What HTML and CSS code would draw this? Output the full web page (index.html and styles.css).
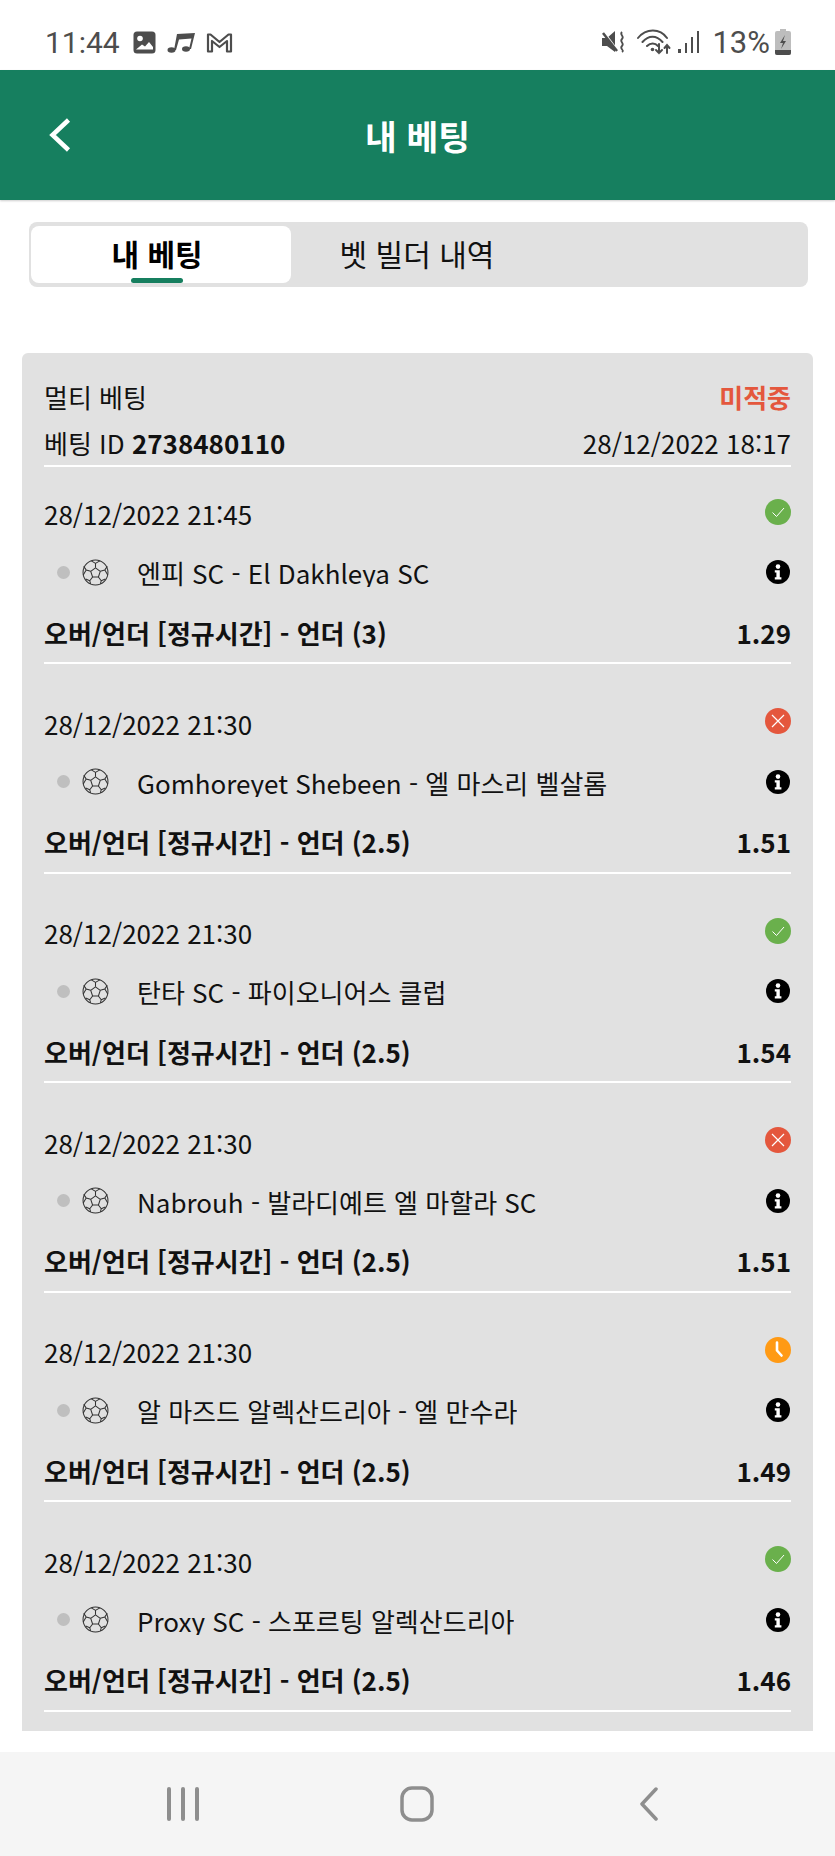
FILE: index.html
```html
<!DOCTYPE html>
<html lang="ko">
<head>
    <meta charset="UTF-8">
    <title>내 베팅</title>
    <link rel="stylesheet" href="styles.css">
</head>
<body>
    <svg class="defs" width="0" height="0">
        <symbol id="ball" viewBox="0 0 26 26">
            <g fill="none" stroke="#333" stroke-width="1" stroke-linejoin="round">
                <circle cx="13" cy="13" r="12"/>
                <path d="M13 8.500l4.600 3.400-1.800 5.400h-5.600l-1.800-5.400z"/>
                <path d="M13 8.500V4.200l-4-2.400M13 4.200l4.200-2.400M17.600 11.900l4.400-1.400 2.400-3.400M22 10.500l2.800 5M15.800 17.300l2.700 3.700-.8 3M18.500 21l4-1.800M10.200 17.300l-2.700 3.700.8 3M7.500 21l-4-1.800M8.400 11.900l-4.400-1.400-2.400-3.400M4 10.500l-2.800 5"/>
            </g>
        </symbol>
        <symbol id="info" viewBox="0 0 24 24">
            <circle cx="12" cy="12" r="12" fill="#000"/>
            <circle cx="12" cy="6.600" r="2.300" fill="#fff"/>
            <path d="M8.800 10.200h5v7h1.600v2.400H8.800v-2.400h1.600v-4.600H8.800z" fill="#fff"/>
        </symbol>
        <symbol id="won" viewBox="0 0 26 26">
            <circle cx="13" cy="13" r="13" fill="#6ab04c"/>
            <path d="M7.500 13.500l4 4 7.500-8.500" fill="none" stroke="#fff" stroke-width="1"/>
        </symbol>
        <symbol id="lost" viewBox="0 0 26 26">
            <circle cx="13" cy="13" r="13" fill="#e4573d"/>
            <path d="M7 7l12 12M19 7L7 19" fill="none" stroke="#fff" stroke-width="1.200"/>
        </symbol>
        <symbol id="pending" viewBox="0 0 26 26">
            <circle cx="13" cy="13" r="13" fill="#ff9a14"/>
            <path d="M12 5.500v8l4.500 5" fill="none" stroke="#fff" stroke-width="2.600" stroke-linecap="round" stroke-linejoin="round"/>
        </symbol>
    </svg>

    <div class="status-bar">
        <div class="status-left">
            <span class="clock">11:44</span>
            <svg width="23" height="23" viewBox="0 0 23 23"><rect x="0.500" y="0.500" width="22" height="22" rx="3.500" fill="#4d4d4d"/><circle cx="7" cy="7.500" r="2.800" fill="#fff"/><path d="M3 18.500l6-5 3 2 4-4.500 4 5v2.500z" fill="#fff"/></svg>
            <svg width="28" height="21" viewBox="0 0 28 21"><g fill="#4d4d4d"><ellipse cx="4.500" cy="18" rx="4" ry="2.800"/><ellipse cx="19" cy="17" rx="4" ry="2.800"/><path d="M7 18L10 2l18-1-4 16h-2l2.500-10.500L12 7.500 9 18z"/></g></svg>
            <svg width="27" height="21" viewBox="0 0 27 21"><path d="M2 19.500V2.500h2.500L13.500 10l9-7.500H25v17h-4V9l-7.500 6L6 9v10.500z" fill="none" stroke="#4d4d4d" stroke-width="2.200" stroke-linejoin="round"/></svg>
        </div>
        <div class="status-right">
            <svg class="mute" width="24" height="24" viewBox="0 0 24 24"><path d="M0 8h5l8-7v21l-8-6H0z" fill="#4d4d4d"/><path d="M1 1l15 20" stroke="#fff" stroke-width="2"/><path d="M1 3l14 18" stroke="#4d4d4d" stroke-width="2.500"/><path d="M20 2c-3 3 3 4 0 7s3 4 0 7 3 4 0 6" fill="none" stroke="#4d4d4d" stroke-width="1.800"/></svg>
            <svg class="wifi" width="36" height="26" viewBox="0 0 36 26"><g fill="none" stroke="#4d4d4d" stroke-width="2" stroke-linecap="round"><path d="M1 9c8-10 22-10 29 0M5.500 13c6-7 14-7 20 0M10 17c3.500-3.500 8-3.500 11 0"/><path d="M22 15v9M19 21l3 3 3-3M30 24v-8M27.500 19l2.500-3 2.500 3"/></g><circle cx="15.500" cy="20.500" r="1.800" fill="#4d4d4d"/></svg>
            <svg class="signal" width="22" height="24" viewBox="0 0 22 24"><g fill="#4d4d4d"><rect x="0" y="19" width="3" height="4"/><rect x="7" y="13" width="2" height="10"/><rect x="13" y="7" width="2" height="16"/><rect x="19" y="1" width="2" height="22"/></g></svg>
            <span class="battery-text">13%</span>
            <svg class="battery" width="16" height="26" viewBox="0 0 16 26"><path d="M5 0h6v2h3a2 2 0 0 1 2 2v20a2 2 0 0 1-2 2H2a2 2 0 0 1-2-2V4a2 2 0 0 1 2-2h3z" fill="#bdbdbd"/><path d="M0 21h16v3a2 2 0 0 1-2 2H2a2 2 0 0 1-2-2z" fill="#4d4d4d"/><path d="M10 6l-5 8h3l-2 6 5-8H8z" fill="#4d4d4d"/></svg>
        </div>
    </div>

    <header class="top-bar">
        <svg class="back" width="24" height="36" viewBox="0 0 24 36"><path d="M20.500 3L4.500 18l16 15" fill="none" stroke="#fff" stroke-width="4.500"/></svg>
        <h1>내 베팅</h1>
    </header>

    <div class="tabs">
        <div class="tab active">내 베팅</div>
        <div class="tab">벳 빌더 내역</div>
    </div>

    <div class="bet-card">
        <div class="bet-head">
            <div class="row head-row">
                <span>멀티 베팅</span>
                <span class="result-lost">미적중</span>
            </div>
            <div class="row head-row">
                <span>베팅 ID <b>2738480110</b></span>
                <span>28/12/2022 18:17</span>
            </div>
        </div>

        <div class="bet-item">
            <div class="row date-row"><span>28/12/2022 21:45</span><svg class="state"><use href="#won"/></svg></div>
            <div class="row match-row"><div class="match"><i class="dot"></i><svg class="ball"><use href="#ball"/></svg><span class="teams">엔피 SC - El Dakhleya SC</span></div><svg class="info"><use href="#info"/></svg></div>
            <div class="row market-row"><span>오버/언더 [정규시간] - 언더 (3)</span><span>1.29</span></div>
        </div>

        <div class="bet-item">
            <div class="row date-row"><span>28/12/2022 21:30</span><svg class="state"><use href="#lost"/></svg></div>
            <div class="row match-row"><div class="match"><i class="dot"></i><svg class="ball"><use href="#ball"/></svg><span class="teams">Gomhoreyet Shebeen - 엘 마스리 벨살롬</span></div><svg class="info"><use href="#info"/></svg></div>
            <div class="row market-row"><span>오버/언더 [정규시간] - 언더 (2.5)</span><span>1.51</span></div>
        </div>

        <div class="bet-item">
            <div class="row date-row"><span>28/12/2022 21:30</span><svg class="state"><use href="#won"/></svg></div>
            <div class="row match-row"><div class="match"><i class="dot"></i><svg class="ball"><use href="#ball"/></svg><span class="teams">탄타 SC - 파이오니어스 클럽</span></div><svg class="info"><use href="#info"/></svg></div>
            <div class="row market-row"><span>오버/언더 [정규시간] - 언더 (2.5)</span><span>1.54</span></div>
        </div>

        <div class="bet-item">
            <div class="row date-row"><span>28/12/2022 21:30</span><svg class="state"><use href="#lost"/></svg></div>
            <div class="row match-row"><div class="match"><i class="dot"></i><svg class="ball"><use href="#ball"/></svg><span class="teams">Nabrouh - 발라디예트 엘 마할라 SC</span></div><svg class="info"><use href="#info"/></svg></div>
            <div class="row market-row"><span>오버/언더 [정규시간] - 언더 (2.5)</span><span>1.51</span></div>
        </div>

        <div class="bet-item">
            <div class="row date-row"><span>28/12/2022 21:30</span><svg class="state"><use href="#pending"/></svg></div>
            <div class="row match-row"><div class="match"><i class="dot"></i><svg class="ball"><use href="#ball"/></svg><span class="teams">알 마즈드 알렉산드리아 - 엘 만수라</span></div><svg class="info"><use href="#info"/></svg></div>
            <div class="row market-row"><span>오버/언더 [정규시간] - 언더 (2.5)</span><span>1.49</span></div>
        </div>

        <div class="bet-item">
            <div class="row date-row"><span>28/12/2022 21:30</span><svg class="state"><use href="#won"/></svg></div>
            <div class="row match-row"><div class="match"><i class="dot"></i><svg class="ball"><use href="#ball"/></svg><span class="teams">Proxy SC - 스포르팅 알렉산드리아</span></div><svg class="info"><use href="#info"/></svg></div>
            <div class="row market-row"><span>오버/언더 [정규시간] - 언더 (2.5)</span><span>1.46</span></div>
        </div>
    </div>

    <nav class="nav-bar">
        <svg width="32" height="34" viewBox="0 0 32 34"><g fill="#8e8e8e"><rect x="0" y="0" width="4" height="34" rx="2"/><rect x="14" y="0" width="4" height="34" rx="2"/><rect x="28" y="0" width="4" height="34" rx="2"/></g></svg>
        <svg width="34" height="36" viewBox="0 0 34 36"><rect x="2" y="2" width="30" height="32" rx="10" fill="none" stroke="#8e8e8e" stroke-width="3.500"/></svg>
        <svg width="20" height="34" viewBox="0 0 20 34"><path d="M17 2L3 17l14 15" fill="none" stroke="#8e8e8e" stroke-width="3.500" stroke-linecap="round" stroke-linejoin="round"/></svg>
    </nav>
</body>
</html>
```

FILE: styles.css
```css
* {
    box-sizing: border-box;
}

body {
    font-family: 'Noto Sans CJK KR', 'Noto Sans', sans-serif;
    background: #fff;
    color: #111;
    margin: 0;
    width: 835px;
    height: 1856px;
    overflow: hidden;
    font-size: 26px;
}

.defs {
    display: block;
    height: 0;
}

.status-bar {
    height: 70px;
    padding: 14px 44px 0 45px;
    display: flex;
    justify-content: space-between;
    align-items: center;
    color: #4d4d4d;
    font-family: 'Roboto', sans-serif;
    font-size: 30px;
}

.status-left,
.status-right {
    display: flex;
    align-items: center;
}

.status-left svg {
    margin-left: 11px;
}

.status-left .clock {
    margin-right: 2px;
}

.mute {
    margin-right: 11px;
}

.wifi {
    margin-right: 5px;
}

.signal {
    margin-right: 12px;
}

.battery-text {
    font-size: 31px;
    margin-right: 5px;
}

.top-bar {
    height: 130px;
    background: #167f5f;
    display: flex;
    align-items: center;
    justify-content: center;
    position: relative;
    box-shadow: 0 1px 2px rgba(0,0,0,0.2);
}

.top-bar h1 {
    margin: 0;
    color: #fff;
    font-size: 34.500px;
    font-weight: 700;
    line-height: 1;
}

.back {
    position: absolute;
    left: 48px;
    top: 47px;
}

.tabs {
    margin: 22px 27px 0 29px;
    height: 65px;
    padding: 4px 4px 4px 2px;
    background: #e1e1e1;
    border-radius: 8px;
    display: flex;
}

.tab {
    width: 260px;
    height: 57px;
    text-align: center;
    font-size: 30px;
    line-height: 55px;
    position: relative;
    border-radius: 8px;
}

.tab + .tab {
    width: 252px;
}

.tab.active {
    background: #fff;
    font-weight: 700;
    color: #000;
    padding-right: 8px;
}

.tab.active::after {
    content: "";
    position: absolute;
    left: 100px;
    bottom: 0;
    width: 52px;
    height: 5px;
    border-radius: 3px;
    background: #167f5f;
}

.bet-card {
    margin: 66px 22px 0;
    height: 1378px;
    padding: 21px 22px 0;
    background: #e1e1e1;
    border-radius: 6px 6px 0 0;
    overflow: hidden;
}

.row {
    display: flex;
    justify-content: space-between;
    align-items: center;
}

.bet-head {
    height: 93px;
    border-bottom: 2px solid #fff;
}

.head-row {
    height: 46px;
    line-height: 46px;
    white-space: nowrap;
}

.head-row b {
    font-weight: 700;
}

.result-lost {
    color: #e4573d;
    font-weight: 700;
}

.bet-item {
    height: 197px;
    border-bottom: 2px solid #fff;
    padding-top: 27px;
}

.bet-item + .bet-item {
    margin-top: 12.600px;
}

.date-row {
    height: 40px;
    line-height: 40px;
}

.state {
    width: 26px;
    height: 26px;
    margin-bottom: 5px;
}

.match-row {
    margin-top: 18px;
    height: 40px;
}

.match {
    display: flex;
    align-items: center;
    padding-left: 13px;
}

.dot {
    width: 13px;
    height: 13px;
    border-radius: 50%;
    background: #bfbfbf;
    margin-right: 12px;
}

.ball {
    width: 27px;
    height: 27px;
    margin-right: 28px;
}

.teams {
    height: 30px;
    line-height: 32px;
    overflow: hidden;
}

.info {
    width: 24px;
    height: 24px;
    margin-right: 1px;
}

.market-row {
    margin-top: 20px;
    height: 40px;
    font-weight: 700;
    white-space: nowrap;
}

.nav-bar {
    margin-top: 21px;
    height: 104px;
    background: #f5f5f5;
    padding: 0 0 0 167px;
    display: flex;
    align-items: center;
}

.nav-bar svg:nth-child(2) {
    margin-left: 201px;
}

.nav-bar svg:nth-child(3) {
    margin-left: 205px;
}
```
